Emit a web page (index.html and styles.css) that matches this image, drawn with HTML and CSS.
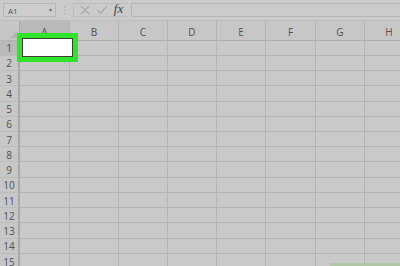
FILE: index.html
```html
<!DOCTYPE html>
<html lang="en">
<head>
    <meta charset="UTF-8">
    <title>Sheet</title>
    <link rel="stylesheet" href="styles.css">
</head>
<body>
    <div class="app">
        <div class="toolbar">
            <div class="namebox">
                <span>A1</span>
                <span class="caret">&#9662;</span>
            </div>
            <div class="sep">&#8942;</div>
            <div class="actions">
                <svg width="12" height="12" viewBox="0 0 12 12"><path d="M2 2 L10 10 M10 2 L2 10" stroke="#a9a9a9" stroke-width="1.3" fill="none"/></svg>
                <svg width="12" height="12" viewBox="0 0 12 12"><path d="M1.5 6.5 L4.5 9.5 L10.5 2.5" stroke="#a9a9a9" stroke-width="1.3" fill="none"/></svg>
                <span class="fx">fx</span>
            </div>
            <div class="formula"></div>
        </div>

        <div class="sheet">
            <div class="corner"><span class="tri"></span></div>
            <div class="colhead selected">A</div>
            <div class="colhead">B</div>
            <div class="colhead">C</div>
            <div class="colhead">D</div>
            <div class="colhead">E</div>
            <div class="colhead">F</div>
            <div class="colhead">G</div>
            <div class="colhead">H</div>

            <div class="rowhead selected">1</div><div class="cell"></div><div class="cell"></div><div class="cell"></div><div class="cell"></div><div class="cell"></div><div class="cell"></div><div class="cell"></div><div class="cell"></div>
            <div class="rowhead">2</div><div class="cell"></div><div class="cell"></div><div class="cell"></div><div class="cell"></div><div class="cell"></div><div class="cell"></div><div class="cell"></div><div class="cell"></div>
            <div class="rowhead">3</div><div class="cell"></div><div class="cell"></div><div class="cell"></div><div class="cell"></div><div class="cell"></div><div class="cell"></div><div class="cell"></div><div class="cell"></div>
            <div class="rowhead">4</div><div class="cell"></div><div class="cell"></div><div class="cell"></div><div class="cell"></div><div class="cell"></div><div class="cell"></div><div class="cell"></div><div class="cell"></div>
            <div class="rowhead">5</div><div class="cell"></div><div class="cell"></div><div class="cell"></div><div class="cell"></div><div class="cell"></div><div class="cell"></div><div class="cell"></div><div class="cell"></div>
            <div class="rowhead">6</div><div class="cell"></div><div class="cell"></div><div class="cell"></div><div class="cell"></div><div class="cell"></div><div class="cell"></div><div class="cell"></div><div class="cell"></div>
            <div class="rowhead">7</div><div class="cell"></div><div class="cell"></div><div class="cell"></div><div class="cell"></div><div class="cell"></div><div class="cell"></div><div class="cell"></div><div class="cell"></div>
            <div class="rowhead">8</div><div class="cell"></div><div class="cell"></div><div class="cell"></div><div class="cell"></div><div class="cell"></div><div class="cell"></div><div class="cell"></div><div class="cell"></div>
            <div class="rowhead">9</div><div class="cell"></div><div class="cell"></div><div class="cell"></div><div class="cell"></div><div class="cell"></div><div class="cell"></div><div class="cell"></div><div class="cell"></div>
            <div class="rowhead">10</div><div class="cell"></div><div class="cell"></div><div class="cell"></div><div class="cell"></div><div class="cell"></div><div class="cell"></div><div class="cell"></div><div class="cell"></div>
            <div class="rowhead">11</div><div class="cell"></div><div class="cell"></div><div class="cell"></div><div class="cell"></div><div class="cell"></div><div class="cell"></div><div class="cell"></div><div class="cell"></div>
            <div class="rowhead">12</div><div class="cell"></div><div class="cell"></div><div class="cell"></div><div class="cell"></div><div class="cell"></div><div class="cell"></div><div class="cell"></div><div class="cell"></div>
            <div class="rowhead">13</div><div class="cell"></div><div class="cell"></div><div class="cell"></div><div class="cell"></div><div class="cell"></div><div class="cell"></div><div class="cell"></div><div class="cell"></div>
            <div class="rowhead">14</div><div class="cell"></div><div class="cell"></div><div class="cell"></div><div class="cell"></div><div class="cell"></div><div class="cell"></div><div class="cell"></div><div class="cell"></div>
            <div class="rowhead">15</div><div class="cell"></div><div class="cell"></div><div class="cell"></div><div class="cell"></div><div class="cell"></div><div class="cell"></div><div class="cell"></div><div class="cell"></div>
        </div>

        <!-- highlight drawn over cell A1 -->
        <div class="highlight"><div class="active"></div></div>
        <div class="corner-tab"></div>
    </div>
</body>
</html>
```

FILE: styles.css
```css
body {
    margin: 0;
    padding: 0;
    background-color: #c9c9c9;
    font-family: "Open Sans", "Liberation Sans", sans-serif;
    color: #474747;
    overflow: hidden;
}

.app {
    position: relative;
    width: 400px;
    height: 266px;
    overflow: hidden;
}

.toolbar {
    display: flex;
    align-items: center;
    height: 21px;
    padding: 0 0 0 3px;
    border-bottom: 1px solid #bdbdbd;
    background-color: #cbcbcb;
    box-sizing: border-box;
}

.namebox {
    display: flex;
    align-items: center;
    justify-content: space-between;
    width: 53px;
    height: 14px;
    padding: 0 3px 0 4px;
    box-sizing: border-box;
    border: 1px solid #b6b6b6;
    background-color: #cdcdcd;
    font-size: 8px;
    color: #4e4e4e;
}

.caret {
    font-size: 6px;
    color: #6a6a6a;
}

.sep {
    width: 17px;
    text-align: center;
    font-size: 9px;
    color: #a5a5a5;
}

.actions {
    display: flex;
    align-items: center;
    justify-content: space-around;
    width: 55px;
    height: 14px;
    box-sizing: border-box;
    border: 1px solid #bcbcbc;
    border-right: none;
    padding: 0 2px;
}

.fx {
    font-family: "Liberation Serif", serif;
    font-style: italic;
    font-size: 13px;
    color: #404040;
    margin-top: -2px;
}

.formula {
    flex: 1;
    height: 14px;
    margin-left: 3px;
    border: 1px solid #b6b6b6;
    border-right: none;
    box-sizing: border-box;
}

.sheet {
    display: grid;
    grid-template-columns: 20px 50px repeat(4, 49px) 50px 49px 49px;
    grid-template-rows: 19.6px;
    grid-auto-rows: 15.24px;
}

.corner,
.colhead,
.rowhead,
.cell {
    box-sizing: border-box;
    border-right: 1px solid #b4b4b4;
    border-bottom: 1px solid #b4b4b4;
}

.corner {
    position: relative;
    background-color: #c6c6c6;
    border-right-color: #aaaaaa;
}

.tri {
    position: absolute;
    right: 2px;
    bottom: 2px;
    width: 0;
    height: 0;
    border-left: 7px solid transparent;
    border-bottom: 7px solid #b3b3b3;
}

.colhead {
    display: flex;
    align-items: center;
    justify-content: center;
    background-color: #c7c7c7;
    font-size: 10px;
    color: #505050;
    padding-top: 4px;
    border-bottom-color: #acacac;
}

.rowhead {
    display: flex;
    align-items: center;
    justify-content: center;
    background-color: #c7c7c7;
    font-size: 10px;
    color: #505050;
    padding-top: 1px;
    border-right: 2px solid #a9a9a9;
    border-bottom-color: #bcbcbc;
}

.selected {
    background-color: #b9b9b9;
}

.cell {
    background-color: #c9c9c9;
}

.highlight {
    position: absolute;
    left: 17px;
    top: 33px;
    width: 61px;
    height: 29px;
    box-sizing: border-box;
    border: 5px solid #2fe52a;
}

.active {
    width: 100%;
    height: 100%;
    box-sizing: border-box;
    border: 1px solid #3c3c3c;
    background-color: #ffffff;
}

.corner-tab {
    position: absolute;
    right: 0;
    bottom: 0;
    width: 70px;
    height: 3px;
    background-color: #b0c6a6;
}
```
